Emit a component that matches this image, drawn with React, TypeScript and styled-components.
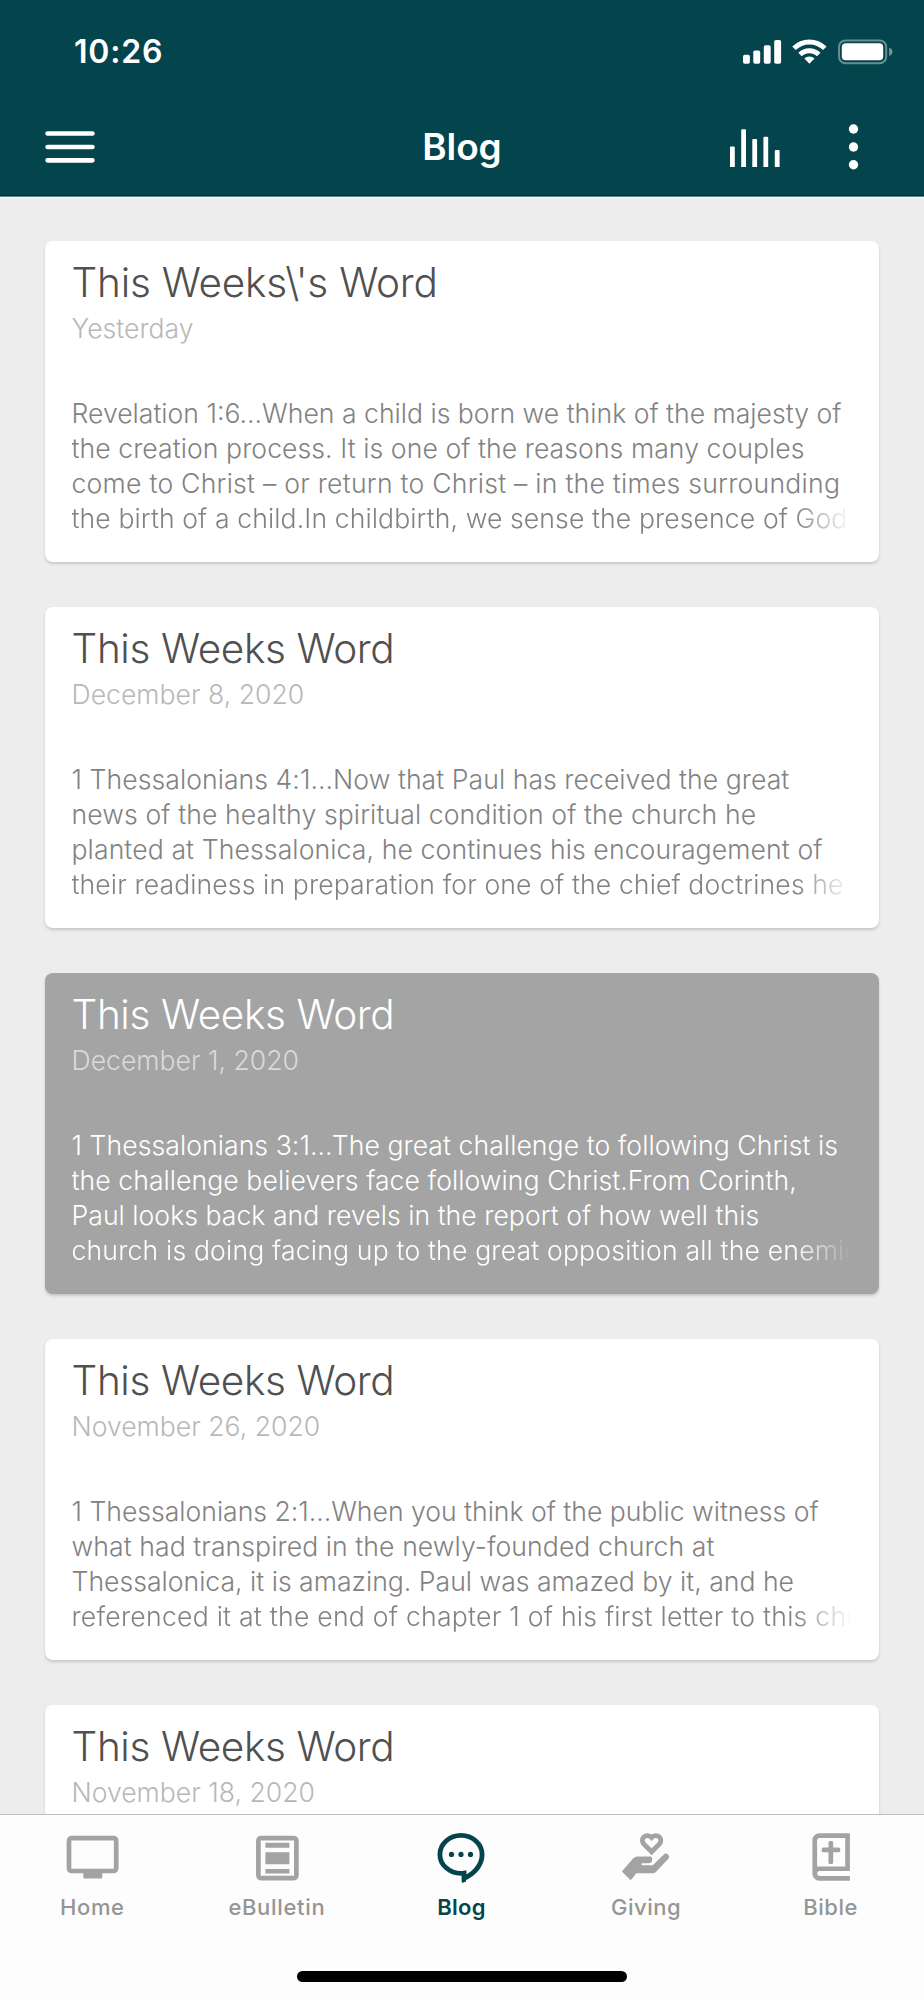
import React from "react";
import styled, { createGlobalStyle } from "styled-components";

const teal = "#04444c";

const GlobalStyle = createGlobalStyle`
  *, *::before, *::after { box-sizing: border-box; }
  html, body { margin: 0; padding: 0; }
  body { font-family: Inter, "Liberation Sans", sans-serif; background: #ededed; }
  svg { display: block; }
`;

const Screen = styled.div`
  display: flex;
  flex-direction: column;
  width: 924px;
  height: 2000px;
  overflow: hidden;
  background: #ededed;
`;

const Header = styled.header`
  flex: none;
  height: 197px;
  background: ${teal};
  color: #fff;
  border-bottom: 1px solid #56858c;
  box-shadow: inset 0 -1px 0 #02363e;
`;

const StatusBar = styled.div`
  display: flex;
  align-items: center;
  justify-content: space-between;
  height: 103px;
  padding: 0 31px 0 74px;
`;

const Clock = styled.span`
  font-size: 32px;
  line-height: 40px;
  font-weight: 600;
  letter-spacing: 0.8px;
`;

const NavBar = styled.div`
  display: grid;
  grid-template-columns: 1fr auto 1fr;
  align-items: center;
  height: 88px;
  padding: 0 65px 0 45px;
`;

const NavTitle = styled.h1`
  margin: 0 0 0 20px;
  font-size: 37px;
  line-height: 46px;
  font-weight: 600;
  letter-spacing: -0.1px;
`;

const NavActions = styled.div`
  display: flex;
  align-items: center;
  justify-content: flex-end;
  gap: 68px;
`;

const Feed = styled.main`
  flex: 1;
  min-height: 0;
  display: flex;
  flex-direction: column;
  gap: 45px;
  padding: 43px 45px 0;
  border-top: 1px solid #fafafa;
  overflow: hidden;
`;

const Card = styled.article<{ $pressed?: boolean }>`
  flex: none;
  height: 321px;
  padding: 18px 27px 0 26.5px;
  border-radius: 8px;
  background: ${(p) => (p.$pressed ? "#a4a4a4" : "#fff")};
  box-shadow: 0 2px 3px rgba(0, 0, 0, 0.16);
  --title: ${(p) => (p.$pressed ? "#fff" : "#505050")};
  --date: ${(p) => (p.$pressed ? "#dadada" : "#b8b8b8")};
  --body: ${(p) => (p.$pressed ? "#fff" : "#828282")};
`;

const CardTitle = styled.h2<{ $tracking: number }>`
  margin: 0;
  font-size: 40.5px;
  line-height: 48px;
  font-weight: 300;
  letter-spacing: ${(p) => p.$tracking}px;
  color: var(--title);
`;

const CardDate = styled.p`
  margin: 4px 0 50px;
  font-size: 26.6px;
  line-height: 35px;
  font-weight: 300;
  color: var(--date);
`;

const Excerpt = styled.div`
  color: var(--body);
`;

const ExcerptLine = styled.div<{ $tracking: number }>`
  width: 780px;
  overflow: hidden;
  white-space: nowrap;
  font-size: 26.6px;
  line-height: 35px;
  font-weight: 300;
  letter-spacing: ${(p) => p.$tracking}px;

  &:last-child {
    mask-image: linear-gradient(to right, #000 calc(100% - 58px), transparent);
  }
`;

const TabBar = styled.nav`
  flex: none;
  display: flex;
  flex-direction: column;
  justify-content: space-between;
  align-items: center;
  height: 186px;
  padding: 16px 0 18px;
  border-top: 1px solid #bdbdbd;
  background: #fdfdfd;
`;

const Tabs = styled.div`
  display: grid;
  grid-template-columns: repeat(5, 184.6px);
  width: 100%;
`;

const Tab = styled.div<{ $active?: boolean }>`
  display: flex;
  flex-direction: column;
  align-items: center;
  gap: 10px;
  color: ${(p) => (p.$active ? teal : "#a3a3a3")};
`;

const TabLabel = styled.span<{ $active?: boolean; $tracking: number }>`
  font-size: 22px;
  line-height: 28px;
  font-weight: ${(p) => (p.$active ? 600 : 500)};
  letter-spacing: ${(p) => p.$tracking}px;
  color: ${(p) => (p.$active ? teal : "#959595")};
`;

const HomeIndicator = styled.div`
  width: 330px;
  height: 11px;
  border-radius: 5.5px;
  background: #000;
`;

const StatusIcons = () => (
  <svg width="150" height="26" viewBox="0 0 150 26" fill="#fff">
    <rect x="0" y="15.7" width="6.9" height="9" rx="1.8" />
    <rect x="10.3" y="11.4" width="6.9" height="13.3" rx="1.8" />
    <rect x="20.8" y="6.2" width="6.9" height="18.5" rx="1.8" />
    <rect x="31.2" y="0.9" width="6.9" height="23.8" rx="1.8" />
    <g fill="none" stroke="#fff" strokeWidth="5">
      <path d="M51 9.3a22 22 0 0 1 30.8 0" />
      <path d="M57 15.5a13.4 13.4 0 0 1 18.8 0" />
    </g>
    <path d="M61.3 19.5a7.4 7.4 0 0 1 10.2 0l-5.1 5.2z" />
    <rect x="96" y="1.4" width="47.2" height="22.8" rx="6.5" fill="none" stroke="#fff" strokeOpacity="0.4" strokeWidth="2" />
    <rect x="98.8" y="4.3" width="41.4" height="17" rx="4" />
    <path d="M146.2 8.6v8.4c2.2-.8 3.2-2.4 3.2-4.2s-1-3.4-3.2-4.2z" fillOpacity="0.45" />
  </svg>
);

const MenuIcon = () => (
  <svg width="50" height="34" viewBox="0 0 50 34" stroke="#fff" strokeWidth="4.7" strokeLinecap="round">
    <path d="M2.6 3.5h44.8M2.6 17h44.8M2.6 30.3h44.8" />
  </svg>
);

const ChartIcon = () => (
  <svg width="50" height="40" viewBox="0 0 50 40" fill="#fff">
    <path d="M0 40V20.5a1 1 0 0 1 1-1h2.8a1 1 0 0 1 1 1V40zM11.2 40V3.2a1 1 0 0 1 1-1H15a1 1 0 0 1 1 1V40zM22.3 40V13a1 1 0 0 1 1-1h2.8a1 1 0 0 1 1 1v27zM33.4 40V10.7a1 1 0 0 1 1-1h2.8a1 1 0 0 1 1 1V40zM44.8 40V24a1 1 0 0 1 1-1h2.8a1 1 0 0 1 1 1v16z" />
  </svg>
);

const MoreIcon = () => (
  <svg width="11" height="46" viewBox="0 0 11 46" fill="#fff">
    <circle cx="5.5" cy="5" r="4.7" />
    <circle cx="5.5" cy="23" r="4.7" />
    <circle cx="5.5" cy="40.8" r="4.7" />
  </svg>
);

const TabIcon = ({ children }: { children: React.ReactNode }) => (
  <svg width="56" height="52" viewBox="0 0 56 52" fill="currentColor" stroke="none">
    {children}
  </svg>
);

const homeIcon = (
  <>
    <rect x="5" y="7.2" width="47.2" height="32.8" rx="2.5" fill="none" stroke="currentColor" strokeWidth="4.7" />
    <path d="M19.3 40h19v6a1.5 1.5 0 0 1-1.5 1.5h-16a1.5 1.5 0 0 1-1.5-1.5z" />
  </>
);

const bulletinIcon = (
  <>
    <rect x="9.4" y="7.1" width="38" height="40" rx="2.5" fill="none" stroke="currentColor" strokeWidth="4.7" />
    <path d="M16.4 11.8h24v5h-24zM16.4 21.2h24v12h-24zM16.4 38h24v4.4h-24z" />
  </>
);

const blogIcon = (
  <>
    <path
      d="M28 4.4C16.4 4.4 6.9 12.9 6.9 23.4S16.4 42.4 28 42.4c1.2 0 2.4-.1 3-.2v5c10-4.2 18.1-13.3 18.1-23.8C49.1 12.9 39.6 4.4 28 4.4z"
      fill="none"
      stroke="currentColor"
      strokeWidth="4.8"
    />
    <path d="M29 41h4v9.5l-4 1.5z" />
    <circle cx="18.5" cy="23.4" r="2.6" />
    <circle cx="28" cy="23.4" r="2.6" />
    <circle cx="37.5" cy="23.4" r="2.6" />
  </>
);

const givingIcon = (
  <>
    <path
      d="M33.6 20.8l-7.100-7c-3-3-2.400-6-.8-7.700 2.200-2.200 5.700-1.800 7.900.5 2.200-2.300 5.700-2.700 7.900-.5 1.600 1.700 2.200 4.700-.8 7.700z"
      fill="none"
      stroke="currentColor"
      strokeWidth="4.8"
    />
    <path d="M3.8 40.5L15.3 27.3a5.5 5.5 0 0 1 4-1.800h13.100a1.700 1.700 0 0 1 1.700 1.700v1.600a3.400 3.400 0 0 1-3.400 3.400h-6.300a1 1 0 0 0 0 2h10.400L45.6 23.7a3.100 3.100 0 0 1 4.500 4.300L37.6 41.2a3.500 3.500 0 0 1-2.500 1.100H18.4L12.7 49.2z" />
  </>
);

const bibleIcon = (
  <>
    <path
      d="M46.9 2.3H16.4a7 7 0 0 0-7 7v33.400a7 7 0 0 0 7 7h30.5v-4.800H16.600a2.450 2.450 0 0 1 0-4.900h30.300zM42.2 7v28.500H14.100V9.500a2.500 2.500 0 0 1 2.500-2.500z"
      fillRule="evenodd"
    />
    <path d="M25.5 11.4a1.500 1.500 0 0 1 1.500-1.500h1.700a1.500 1.500 0 0 1 1.500 1.500v5.200h5.500a1.500 1.500 0 0 1 1.500 1.500v1.700a1.500 1.500 0 0 1-1.500 1.500h-5.500v10.200a1.500 1.500 0 0 1-1.500 1.500H27a1.500 1.500 0 0 1-1.500-1.500V21.300H20.200a1.500 1.500 0 0 1-1.500-1.500v-1.700a1.500 1.500 0 0 1 1.500-1.500h5.300z" />
  </>
);

type Line = [text: string, tracking: number];
type Post = { title: string; titleTracking: number; date: string; pressed?: boolean; lines: Line[] };

const posts: Post[] = [
  {
    title: "This Weeks\\'s Word",
    titleTracking: -0.22,
    date: "Yesterday",
    lines: [
      ["Revelation 1:6...When a child is born we think of the majesty of", 0],
      ["the creation process. It is one of the reasons many couples", 0.06],
      ["come to Christ – or return to Christ – in the times surrounding", 0.24],
      ["the birth of a child.In childbirth, we sense the presence of God", 0.1],
    ],
  },
  {
    title: "This Weeks Word",
    titleTracking: -0.37,
    date: "December 8, 2020",
    lines: [
      ["1 Thessalonians 4:1...Now that Paul has received the great", 0.05],
      ["news of the healthy spiritual condition of the church he", 0.1],
      ["planted at Thessalonica, he continues his encouragement of", 0.1],
      ["their readiness in preparation for one of the chief doctrines he", 0.11],
    ],
  },
  {
    title: "This Weeks Word",
    titleTracking: -0.37,
    date: "December 1, 2020",
    pressed: true,
    lines: [
      ["1 Thessalonians 3:1...The great challenge to following Christ is", 0.056],
      ["the challenge believers face following Christ.From Corinth,", 0.06],
      ["Paul looks back and revels in the report of how well this", 0.034],
      ["church is doing facing up to the great opposition all the enemies", 0.17],
    ],
  },
  {
    title: "This Weeks Word",
    titleTracking: -0.37,
    date: "November 26, 2020",
    lines: [
      ["1 Thessalonians 2:1...When you think of the public witness of", -0.018],
      ["what had transpired in the newly-founded church at", 0.074],
      ["Thessalonica, it is amazing. Paul was amazed by it, and he", 0],
      ["referenced it at the end of chapter 1 of his first letter to this church", 0.249],
    ],
  },
  { title: "This Weeks Word", titleTracking: -0.37, date: "November 18, 2020", lines: [] },
];

const tabs = [
  { label: "Home", icon: homeIcon, tracking: 0.59 },
  { label: "eBulletin", icon: bulletinIcon, tracking: 0.68 },
  { label: "Blog", icon: blogIcon, tracking: 0.3, active: true },
  { label: "Giving", icon: givingIcon, tracking: 0.48 },
  { label: "Bible", icon: bibleIcon, tracking: 0.55 },
];

export default function App() {
  return (
    <>
      <GlobalStyle />
      <Screen>
        <Header>
          <StatusBar>
            <Clock>10:26</Clock>
            <StatusIcons />
          </StatusBar>
          <NavBar>
            <MenuIcon />
            <NavTitle>Blog</NavTitle>
            <NavActions>
              <ChartIcon />
              <MoreIcon />
            </NavActions>
          </NavBar>
        </Header>
        <Feed>
          {posts.map((post) => (
            <Card key={post.date} $pressed={post.pressed}>
              <CardTitle $tracking={post.titleTracking}>{post.title}</CardTitle>
              <CardDate>{post.date}</CardDate>
              <Excerpt>
                {post.lines.map(([text, tracking]) => (
                  <ExcerptLine key={text} $tracking={tracking}>
                    {text}
                  </ExcerptLine>
                ))}
              </Excerpt>
            </Card>
          ))}
        </Feed>
        <TabBar>
          <Tabs>
            {tabs.map((tab) => (
              <Tab key={tab.label} $active={tab.active}>
                <TabIcon>{tab.icon}</TabIcon>
                <TabLabel $active={tab.active} $tracking={tab.tracking}>
                  {tab.label}
                </TabLabel>
              </Tab>
            ))}
          </Tabs>
          <HomeIndicator />
        </TabBar>
      </Screen>
    </>
  );
}
